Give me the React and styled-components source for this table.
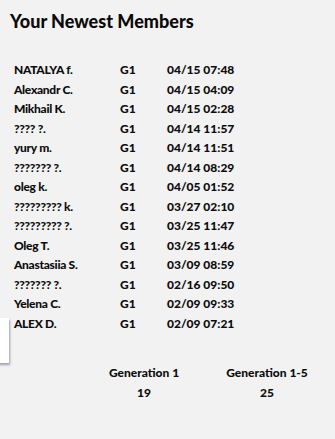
import React from "react";
import styled, { createGlobalStyle } from "styled-components";

const GlobalStyle = createGlobalStyle`
  html, body {
    margin: 0;
    padding: 0;
    background: #f2f2f2;
  }
  body {
    font-family: Lato, "Open Sans", sans-serif;
    color: #0d0d0d;
  }
`;

const Page = styled.div`
  position: relative;
  width: 335px;
  height: 439px;
  overflow: hidden;
  background: #f2f2f2;
  padding-top: 10px;
  box-sizing: border-box;
`;

const Title = styled.h2`
  margin: 0;
  padding-left: 10px;
  font-size: 18px;
  line-height: 22px;
  font-weight: 900;
  color: #0a0a0a;
`;

const MemberList = styled.div`
  margin-top: 28px;
  padding-left: 14px;
`;

const MemberRow = styled.div`
  display: grid;
  grid-template-columns: 106px 47px auto;
  font-size: 12px;
  line-height: 19.5px;
  font-weight: 900;
  white-space: nowrap;
`;

const Cell = styled.span`
  letter-spacing: ${(p) => (p.$tight ? "-0.3px" : "0")};
`;

const Totals = styled.div`
  display: flex;
  gap: 13px;
  margin-top: 30px;
  padding-left: 89px;
`;

const TotalColumn = styled.div`
  width: 110px;
  text-align: center;
  font-size: 12px;
  line-height: 19.5px;
  font-weight: 900;
`;

// partly visible popup sticking in from the left edge
const EdgePopup = styled.div`
  position: absolute;
  left: -20px;
  top: 318px;
  width: 29px;
  height: 45px;
  background: #fff;
  box-shadow: 1px 2px 2px rgba(90, 90, 150, 0.55);
`;

const members = [
  ["NATALYA f.", "G1", "04/15 07:48"],
  ["Alexandr C.", "G1", "04/15 04:09"],
  ["Mikhail K.", "G1", "04/15 02:28"],
  ["???? ?.", "G1", "04/14 11:57"],
  ["yury m.", "G1", "04/14 11:51"],
  ["??????? ?.", "G1", "04/14 08:29"],
  ["oleg k.", "G1", "04/05 01:52"],
  ["????????? k.", "G1", "03/27 02:10"],
  ["????????? ?.", "G1", "03/25 11:47"],
  ["Oleg T.", "G1", "03/25 11:46"],
  ["Anastasiia S.", "G1", "03/09 08:59"],
  ["??????? ?.", "G1", "02/16 09:50"],
  ["Yelena C.", "G1", "02/09 09:33"],
  ["ALEX D.", "G1", "02/09 07:21"],
];

export default function App() {
  return (
    <>
      <GlobalStyle />
      <Page>
        <Title>Your Newest Members</Title>
        <MemberList>
          {members.map(([name, gen, date], i) => (
            <MemberRow key={i}>
              <Cell $tight>{name}</Cell>
              <Cell>{gen}</Cell>
              <Cell>{date}</Cell>
            </MemberRow>
          ))}
        </MemberList>
        <Totals>
          <TotalColumn>
            <div>Generation 1</div>
            <div>19</div>
          </TotalColumn>
          <TotalColumn>
            <div>Generation 1-5</div>
            <div>25</div>
          </TotalColumn>
        </Totals>
        <EdgePopup />
      </Page>
    </>
  );
}
